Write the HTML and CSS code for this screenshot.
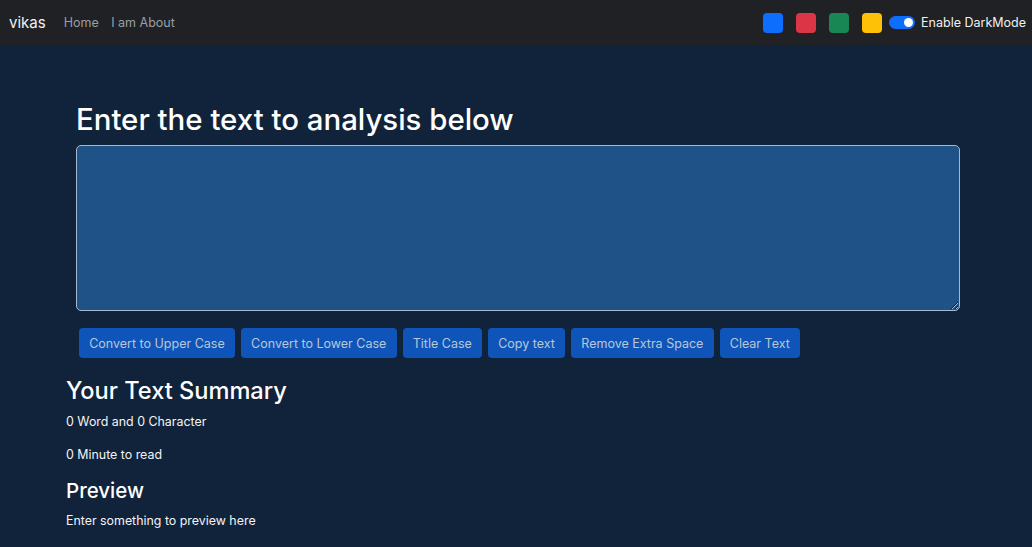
FILE: index.html
```html
<!DOCTYPE html>
<html lang="en">
<head>
<meta charset="utf-8">
<title>TextUtils</title>
<link rel="stylesheet" href="styles.css">
</head>
<body>
<nav class="navbar">
  <div class="nav-left">
    <a class="brand" href="#">vikas</a>
    <a class="nav-link" href="#">Home</a>
    <a class="nav-link" href="#">I am About</a>
  </div>
  <div class="nav-right">
    <span class="swatch swatch-blue"></span>
    <span class="swatch swatch-red"></span>
    <span class="swatch swatch-green"></span>
    <span class="swatch swatch-yellow"></span>
    <span class="toggle"><span class="knob"></span></span>
    <span class="toggle-label">Enable DarkMode</span>
  </div>
</nav>
<main class="main">
  <section class="editor">
    <h1 class="title">Enter the text to analysis below</h1>
    <textarea class="textbox" rows="8"></textarea>
    <div class="actions">
      <button class="btn">Convert to Upper Case</button>
      <button class="btn">Convert to Lower Case</button>
      <button class="btn">Title Case</button>
      <button class="btn">Copy text</button>
      <button class="btn">Remove Extra Space</button>
      <button class="btn">Clear Text</button>
    </div>
  </section>
  <section class="summary">
    <h2 class="summary-title">Your Text Summary</h2>
    <p class="line">0 Word and 0 Character</p>
    <p class="line">0 Minute to read</p>
    <h3 class="preview-title">Preview</h3>
    <p class="line preview-text">Enter something to preview here</p>
  </section>
</main>
</body>
</html>
```
FILE: styles.css
```css
* { box-sizing: border-box; }
html, body { margin: 0; padding: 0; }
body {
  background: #11233a;
  color: #ffffff;
  font-family: Inter, "Liberation Sans", Arial, sans-serif;
  font-size: 12.4px;
  min-height: 547px;
}
.navbar {
  height: 45px;
  background: #1f2125;
  display: flex;
  align-items: center;
  justify-content: space-between;
  padding: 0 6px 0 9px;
}
.nav-left { display: flex; align-items: center; }
.brand {
  color: #f2f2f2;
  text-decoration: none;
  font-size: 15px;
  margin-right: 12px;
}
.nav-link {
  color: #9b9ea2;
  text-decoration: none;
  font-size: 12.5px;
  padding: 0 6.5px 0 6px;
}
.nav-right { display: flex; align-items: center; }
.swatch {
  width: 20px;
  height: 20px;
  border-radius: 4px;
  margin-right: 13px;
  display: inline-block;
}
.swatch-blue { background: #0d6efd; }
.swatch-red { background: #dc3545; }
.swatch-green { background: #198754; }
.swatch-yellow { background: #ffc107; margin-right: 7px; }
.toggle {
  width: 26px;
  height: 13px;
  border-radius: 7px;
  background: #0d6efd;
  display: flex;
  align-items: center;
  justify-content: flex-end;
  padding-right: 2px;
  margin-right: 6px;
}
.knob {
  width: 9px;
  height: 9px;
  border-radius: 50%;
  background: #ffffff;
}
.toggle-label { color: #f0f0f0; font-size: 12.5px; }
.main { padding: 56px 0 0 66px; }
.editor { padding-left: 10px; width: 894px; }
.title {
  font-size: 29.4px;
  font-weight: 500;
  line-height: 38px;
  margin: 0 0 6px;
  color: #ffffff;
}
.textbox {
  display: block;
  width: 884px;
  height: 166px;
  background: #1f5286;
  border: 1px solid #a7b8cc;
  border-radius: 5px;
  color: #fff;
  resize: vertical;
  margin: 0;
}
.actions {
  display: flex;
  gap: 6px;
  margin: 17px 0 0 3px;
}
.btn {
  height: 30px;
  padding: 0 10.2px;
  background: #0f55b9;
  color: #b9c6d8;
  border: none;
  border-radius: 4px;
  font-family: Inter, "Liberation Sans", Arial, sans-serif;
  font-size: 12.5px;
}
.summary { padding-top: 18px; }
.summary-title {
  font-size: 23.6px;
  font-weight: 500;
  line-height: 30px;
  margin: 0 0 6px;
}
.line {
  font-size: 12.4px;
  line-height: 20px;
  margin: 0 0 13px;
  color: #f4f4f4;
}
.preview-title {
  font-size: 20.5px;
  font-weight: 500;
  line-height: 26px;
  margin: 0 0 7px;
}
.preview-text { margin: 0; }
```
